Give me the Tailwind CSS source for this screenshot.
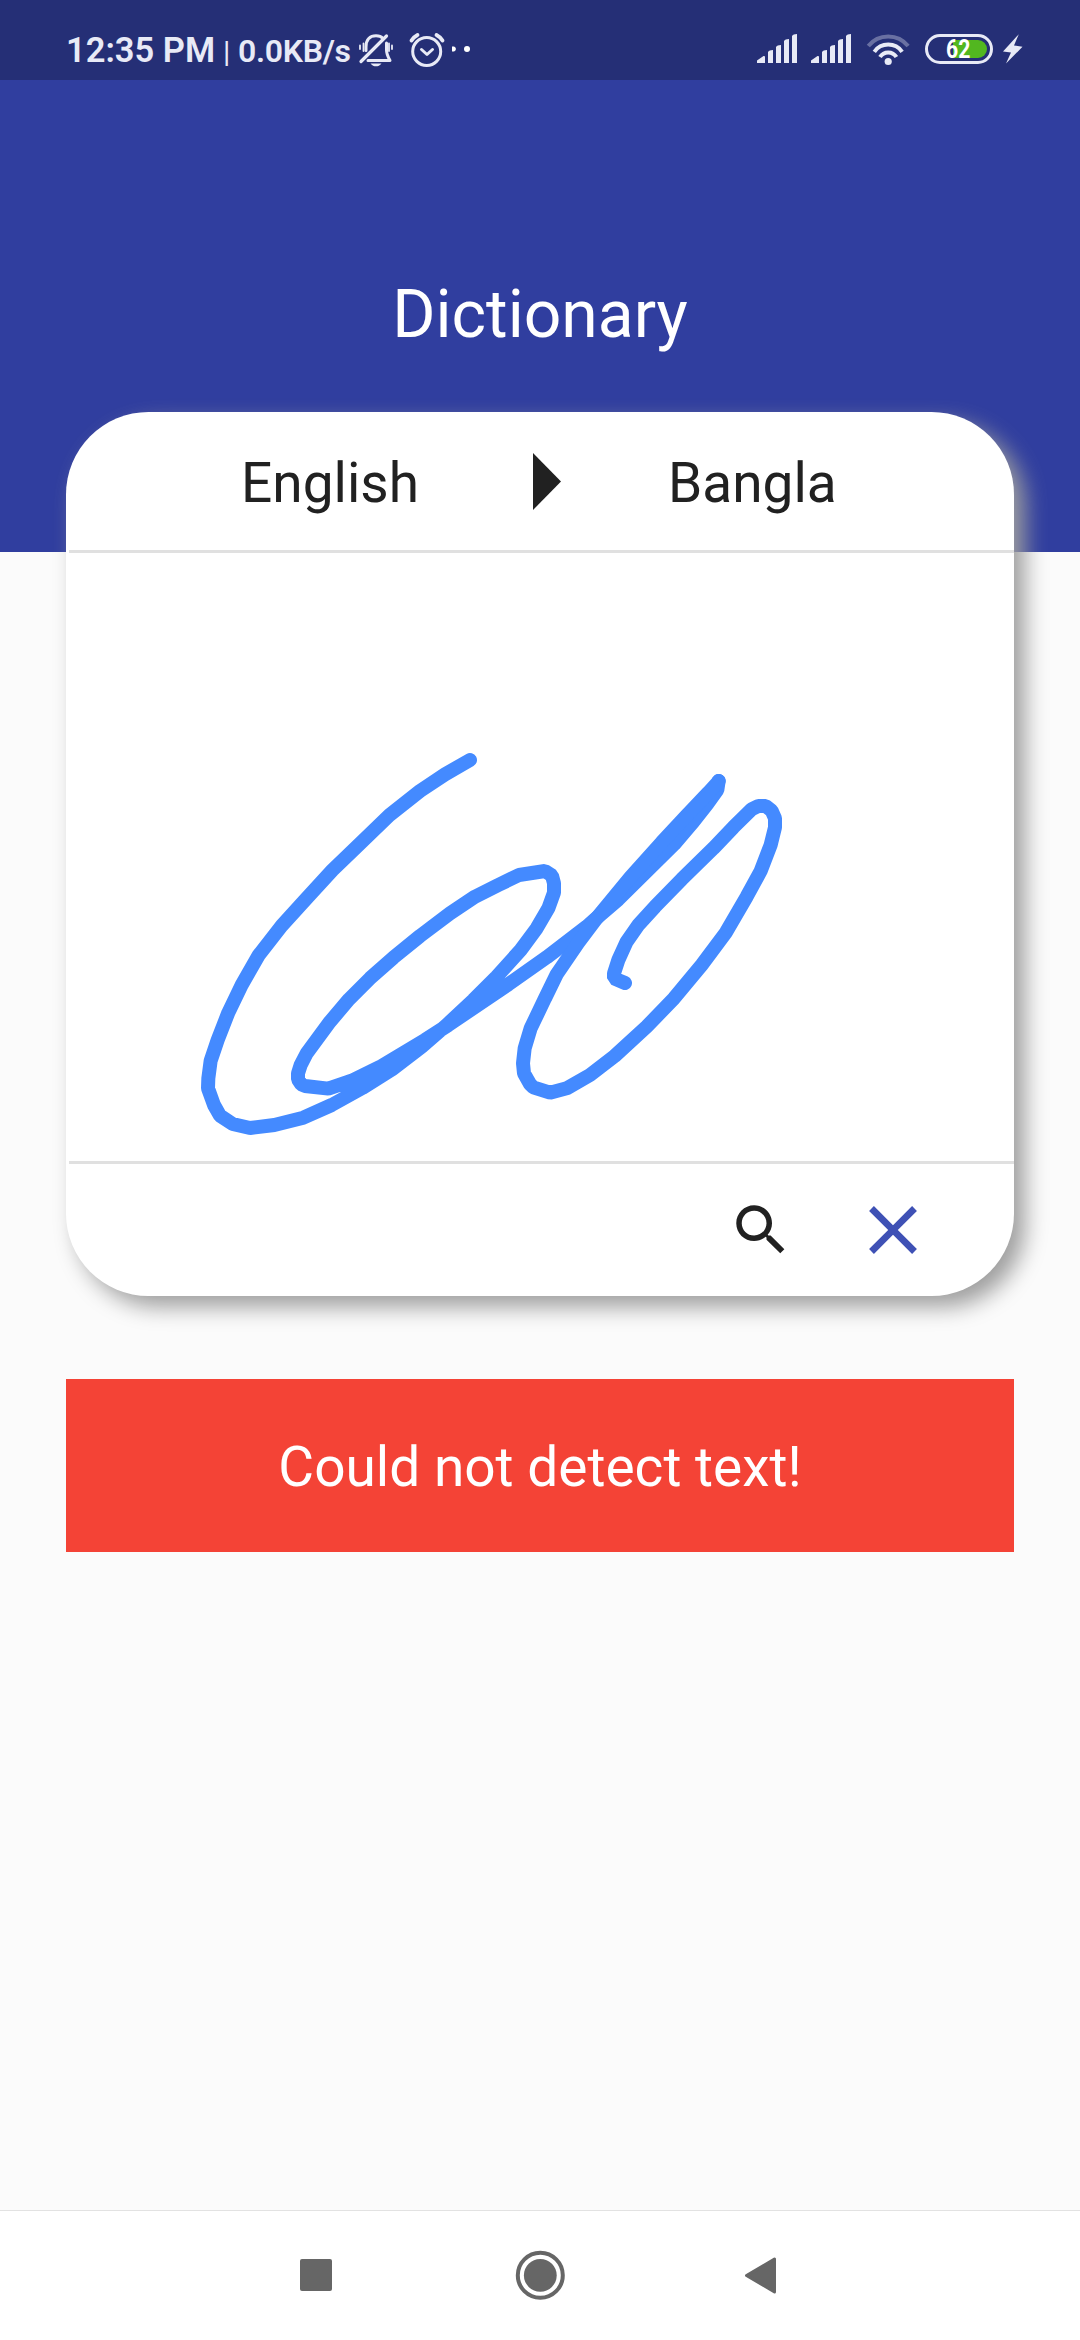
<!DOCTYPE html>
<html lang="en">
<head>
<meta charset="utf-8">
<title>Dictionary</title>
<script src="https://cdn.jsdelivr.net/npm/@tailwindcss/browser@4"></script>
</head>
<body class="flex h-[2340px] w-[1080px] flex-col overflow-hidden bg-[#fbfbfb] font-['Roboto',sans-serif]">

<!-- Status bar -->
<div class="flex h-20 shrink-0 items-start bg-[#252f76] text-[#e8eaf6]">
  <div class="flex w-[358px] shrink-0 items-baseline whitespace-nowrap pt-[29px] pl-[66px] leading-[42px]">
    <span class="w-[157px] text-[34.5px] font-semibold">12:35 PM</span>
    <span class="w-[15px] text-[30px]">|</span>
    <span class="text-[32px] font-semibold tracking-[-0.3px]">0.0KB/s</span>
  </div>
  <svg class="h-20 w-[120px] shrink-0" viewBox="358 0 120 80" fill="none" stroke="#e8eaf6" stroke-width="3" stroke-linecap="round" stroke-linejoin="round">
    <path d="M366 50.500V47C366 39.500 370 35.800 376 35.800C379 35.800 381.500 36.800 383 38.500M386.500 43V50C386.500 54 388 57 390 60.500H368"/>
    <path d="M361 61.500L386.500 36" stroke-width="3.200"/>
    <path d="M363.500 43.500V51M360 45.500V49M389 43.500V51M392 45.500V49" stroke-width="1.800"/>
    <path d="M370.500 63.500H381.500C380 65.500 378 66.300 376 66.300S372 65.500 370.500 63.500Z" fill="#e8eaf6" stroke="none"/>
    <circle cx="426.700" cy="51.500" r="14"/>
    <path d="M421.500 49.500L427 54.500L432.500 49.500"/>
    <path d="M411.500 40.500C413 38 415 36.300 417.500 35M436.500 35C439 36.300 441 38 442.500 40.500" stroke-width="3.800"/>
    <path d="M452 46.500H454C456.500 47.500 456.500 50.500 454 51.500H452Z" fill="#fff" stroke="none"/>
    <circle cx="467" cy="49" r="3" fill="#fff" stroke="none"/>
  </svg>
  <svg class="ml-[262px] h-20 w-[175px] shrink-0" viewBox="740 0 175 80" fill="#e8eaf6">
    <path id="signal" d="M757 63V60.500L763.500 56Q765 55.500 765 57V63ZM768 63V52Q769 50 773 50V63ZM776 63V47Q777 45 781 45V63ZM784 63V41Q785 39 789 39V63ZM792 63V36Q793 34 797 34V63Z"/>
    <use href="#signal" x="54"/>
    <circle cx="888.200" cy="61.500" r="3.600"/>
    <g fill="none" stroke="#e8eaf6" stroke-width="4">
      <path d="M868.300 46A25.500 25.500 0 0 1 908.100 46" opacity=".35"/>
      <path d="M874.300 51.800A17 17 0 0 1 902.100 51.800"/>
      <path d="M880 57A9.600 9.600 0 0 1 896.400 57"/>
    </g>
  </svg>
  <div class="relative mt-[34px] ml-[10px] flex h-[30px] w-[68px] shrink-0 items-center rounded-full border-[3px] border-[#e8eaf6]">
    <div class="ml-[25px] h-[18px] w-[34px] rounded-r-full bg-[#52b720]"></div>
    <span class="absolute top-[-0.5px] left-[18px] origin-left scale-x-85 text-[25px] leading-[25px] font-bold text-white">62</span>
  </div>
  <svg class="h-20 w-[40px] shrink-0" viewBox="993 0 40 80" fill="#e8eaf6">
    <path d="M1018.800 34.200L1003 51.500L1011 52.500L1006 63.500L1022.500 46.800L1014 45.500Z"/>
  </svg>
</div>

<!-- App header -->
<header class="flex h-[472px] shrink-0 justify-center bg-[#303e9f] pt-[196px]">
  <h1 class="h-20 text-[66px] leading-[78px] text-white">Dictionary</h1>
</header>

<!-- Handwriting card -->
<main class="-mt-[140px] flex flex-col px-[66px]">
  <section class="flex h-[884px] flex-col rounded-[82.5px] bg-white shadow-[11px_11px_22px_#9e9e9e]">
    <div class="flex h-[138px] items-center text-[55px] leading-[64px] text-[#212121]">
      <span class="w-[467px] pt-[3px] pl-[175px]">English</span>
      <svg class="h-[57px] w-7" viewBox="0 0 28 57" fill="#212121"><path d="M0 0L28 28.500L0 57Z"/></svg>
      <span class="ml-[107px] pt-[3px]">Bangla</span>
    </div>
    <div class="ml-[3px] h-[3px] bg-[#e0e0e0]"></div>
    <svg class="h-[608px] w-[948px] shrink-0" viewBox="-342 -501 2844 1824" fill="none" stroke="#448aff" stroke-width="42" stroke-linecap="round" stroke-linejoin="bevel">
      <polyline points="870,120 795,163 720,213 628,286 545,366 457,451 380,535 305,617 236,706 185,795 145,878 113,960 92,1022 85,1075 84,1105 102,1155 120,1187 158,1212 210,1224 283,1215 370,1193 455,1155 547,1104 635,1049 725,980 800,915 880,840 950,770 1022,690 1070,625 1105,565 1122,518 1122,490 1116,467 1095,453 1017,465 955,495 885,530 810,580 720,648 640,713 570,775 507,838 450,905 380,1000 362,1035 354,1060 354,1078 364,1093 375,1098 445,1106 515,1082 605,1038 735,960 805,915 985,793 1100,712 1220,620 1245,598 1315,538 1482,373 1540,305 1583,250 1612,210 1616,183"/>
      <polyline points="1616,183 1611,190 1585,218 1524,282 1445,367 1350,473 1248,597 1195,668 1130,763 1095,835 1052,925 1034,985 1029,1030 1032,1060 1050,1092 1060,1102 1110,1118 1160,1105 1230,1065 1304,1008 1400,920 1482,835 1565,735 1638,637 1700,530 1742,453 1772,375 1785,322 1785,295 1775,272 1757,258 1735,258 1715,268 1660,322 1600,385 1505,478 1425,560 1375,615 1340,665 1315,720 1302,760 1302,775 1335,789"/>
    </svg>
    <div class="ml-[3px] h-[3px] bg-[#e0e0e0]"></div>
    <div class="flex h-[132px] items-center justify-end gap-[58px] pr-[80px]">
      <svg class="size-[66px]" viewBox="0 0 24 24" fill="#212121"><path d="M15.500 14h-.79l-.28-.27C15.410 12.590 16 11.110 16 9.500 16 5.910 13.090 3 9.500 3S3 5.910 3 9.500 5.910 16 9.500 16c1.610 0 3.090-.59 4.230-1.570l.27.28v.79l5 4.990L20.490 19l-4.990-5zm-6 0C7.010 14 5 11.990 5 9.500S7.010 5 9.500 5 14 7.010 14 9.500 11.990 14 9.500 14z"/></svg>
      <svg class="size-[82px]" viewBox="0 0 24 24" fill="#3f51b5"><path d="M19 6.410L17.590 5 12 10.590 6.410 5 5 6.410 10.590 12 5 17.590 6.410 19 12 13.410 17.590 19 19 17.590 13.410 12z"/></svg>
    </div>
  </section>
  <div class="mt-[83px] flex h-[173px] items-center justify-center bg-[#f44336] pt-[2px] text-[55px] leading-[64px] text-white">Could not detect text!</div>
</main>

<!-- System navigation -->
<nav class="mt-auto flex h-[130px] shrink-0 border-t border-[#e2e2e2] bg-white">
  <svg class="h-[129px] w-[1080px]" viewBox="0 2211 1080 129" fill="#666">
    <rect x="300" y="2259" width="32" height="32" rx="2"/>
    <circle cx="540.300" cy="2275.300" r="22.500" fill="none" stroke="#666" stroke-width="4"/>
    <circle cx="540.300" cy="2275.300" r="16.400"/>
    <path d="M746.500 2275.500L774.500 2259V2292Z" stroke="#666" stroke-width="3" stroke-linejoin="round"/>
  </svg>
</nav>
</body>
</html>
